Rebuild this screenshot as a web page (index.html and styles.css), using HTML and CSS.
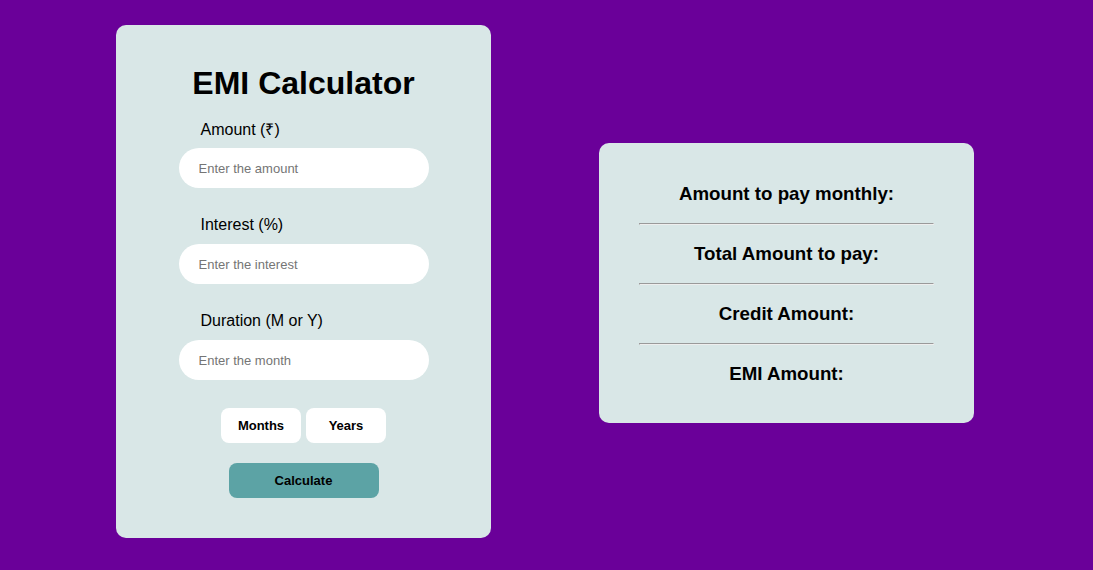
FILE: index.html
```html
<!DOCTYPE html>
<html>
<head>
<meta charset="utf-8">
<link rel="stylesheet" href="styles.css">
</head>
<body>
<div class="page">
  <div class="card calc">
    <h1 class="title">EMI Calculator</h1>
    <div class="form">
      <label class="label">Amount (₹)</label>
      <input class="field" type="text" placeholder="Enter the amount">
      <label class="label">Interest (%)</label>
      <input class="field" type="text" placeholder="Enter the interest">
      <label class="label">Duration (M or Y)</label>
      <input class="field" type="text" placeholder="Enter the month">
    </div>
    <div class="toggles">
      <button class="toggle">Months</button>
      <button class="toggle">Years</button>
    </div>
    <button class="calc-btn">Calculate</button>
  </div>
  <div class="card result">
    <h3 class="res">Amount to pay monthly:</h3>
    <hr class="sep">
    <h3 class="res">Total Amount to pay:</h3>
    <hr class="sep">
    <h3 class="res">Credit Amount:</h3>
    <hr class="sep">
    <h3 class="res">EMI Amount:</h3>
  </div>
</div>
</body>
</html>
```

FILE: styles.css
```css
html, body {
  margin: 0;
  padding: 0;
}
body {
  background: #6a0099;
  font-family: "Liberation Sans", Arial, sans-serif;
  color: #000;
}
.page {
  height: 570px;
  display: flex;
  justify-content: center;
  align-items: flex-start;
  gap: 108px;
  padding-right: 3px;
  box-sizing: border-box;
}
.card {
  background: #d9e7e7;
  border-radius: 10px;
  width: 375px;
  box-sizing: border-box;
}
.calc {
  margin-top: 25px;
  height: 513px;
  display: flex;
  flex-direction: column;
  align-items: center;
  padding-top: 40px;
}
.title {
  font-size: 32px;
  font-weight: bold;
  margin: 0 0 19px 0;
  line-height: 37px;
}
.form {
  width: 250px;
  display: flex;
  flex-direction: column;
}
.label {
  font-size: 16px;
  line-height: 18px;
  padding-left: 22px;
  margin-bottom: 9px;
}
.field + .label {
  margin-top: 28px;
  margin-bottom: 10px;
}
.field {
  height: 40px;
  border: none;
  border-radius: 20px;
  background: #fff;
  padding: 0 20px;
  font-family: "Liberation Sans", Arial, sans-serif;
  font-size: 13px;
  outline: none;
  box-sizing: border-box;
}
.field::placeholder {
  color: #757575;
}
.toggles {
  display: flex;
  gap: 5px;
  margin-top: 28px;
  margin-bottom: 20px;
}
.toggle {
  width: 80px;
  height: 35px;
  border: none;
  border-radius: 8px;
  background: #fff;
  font-family: "Liberation Sans", Arial, sans-serif;
  font-size: 13px;
  font-weight: bold;
  color: #000;
}
.calc-btn {
  width: 150px;
  height: 35px;
  border: none;
  border-radius: 8px;
  background: #5ca3a5;
  font-family: "Liberation Sans", Arial, sans-serif;
  font-size: 13px;
  font-weight: bold;
  color: #000;
}
.result {
  margin-top: 143px;
  height: 280px;
  padding: 22px 40px 20px;
  text-align: center;
}
.res {
  font-size: 18.72px;
  line-height: 22px;
  font-weight: bold;
  margin: 18px 0;
}
.sep {
  margin: 8px 0;
  border: 1px inset;
  color: gray;
}
```
